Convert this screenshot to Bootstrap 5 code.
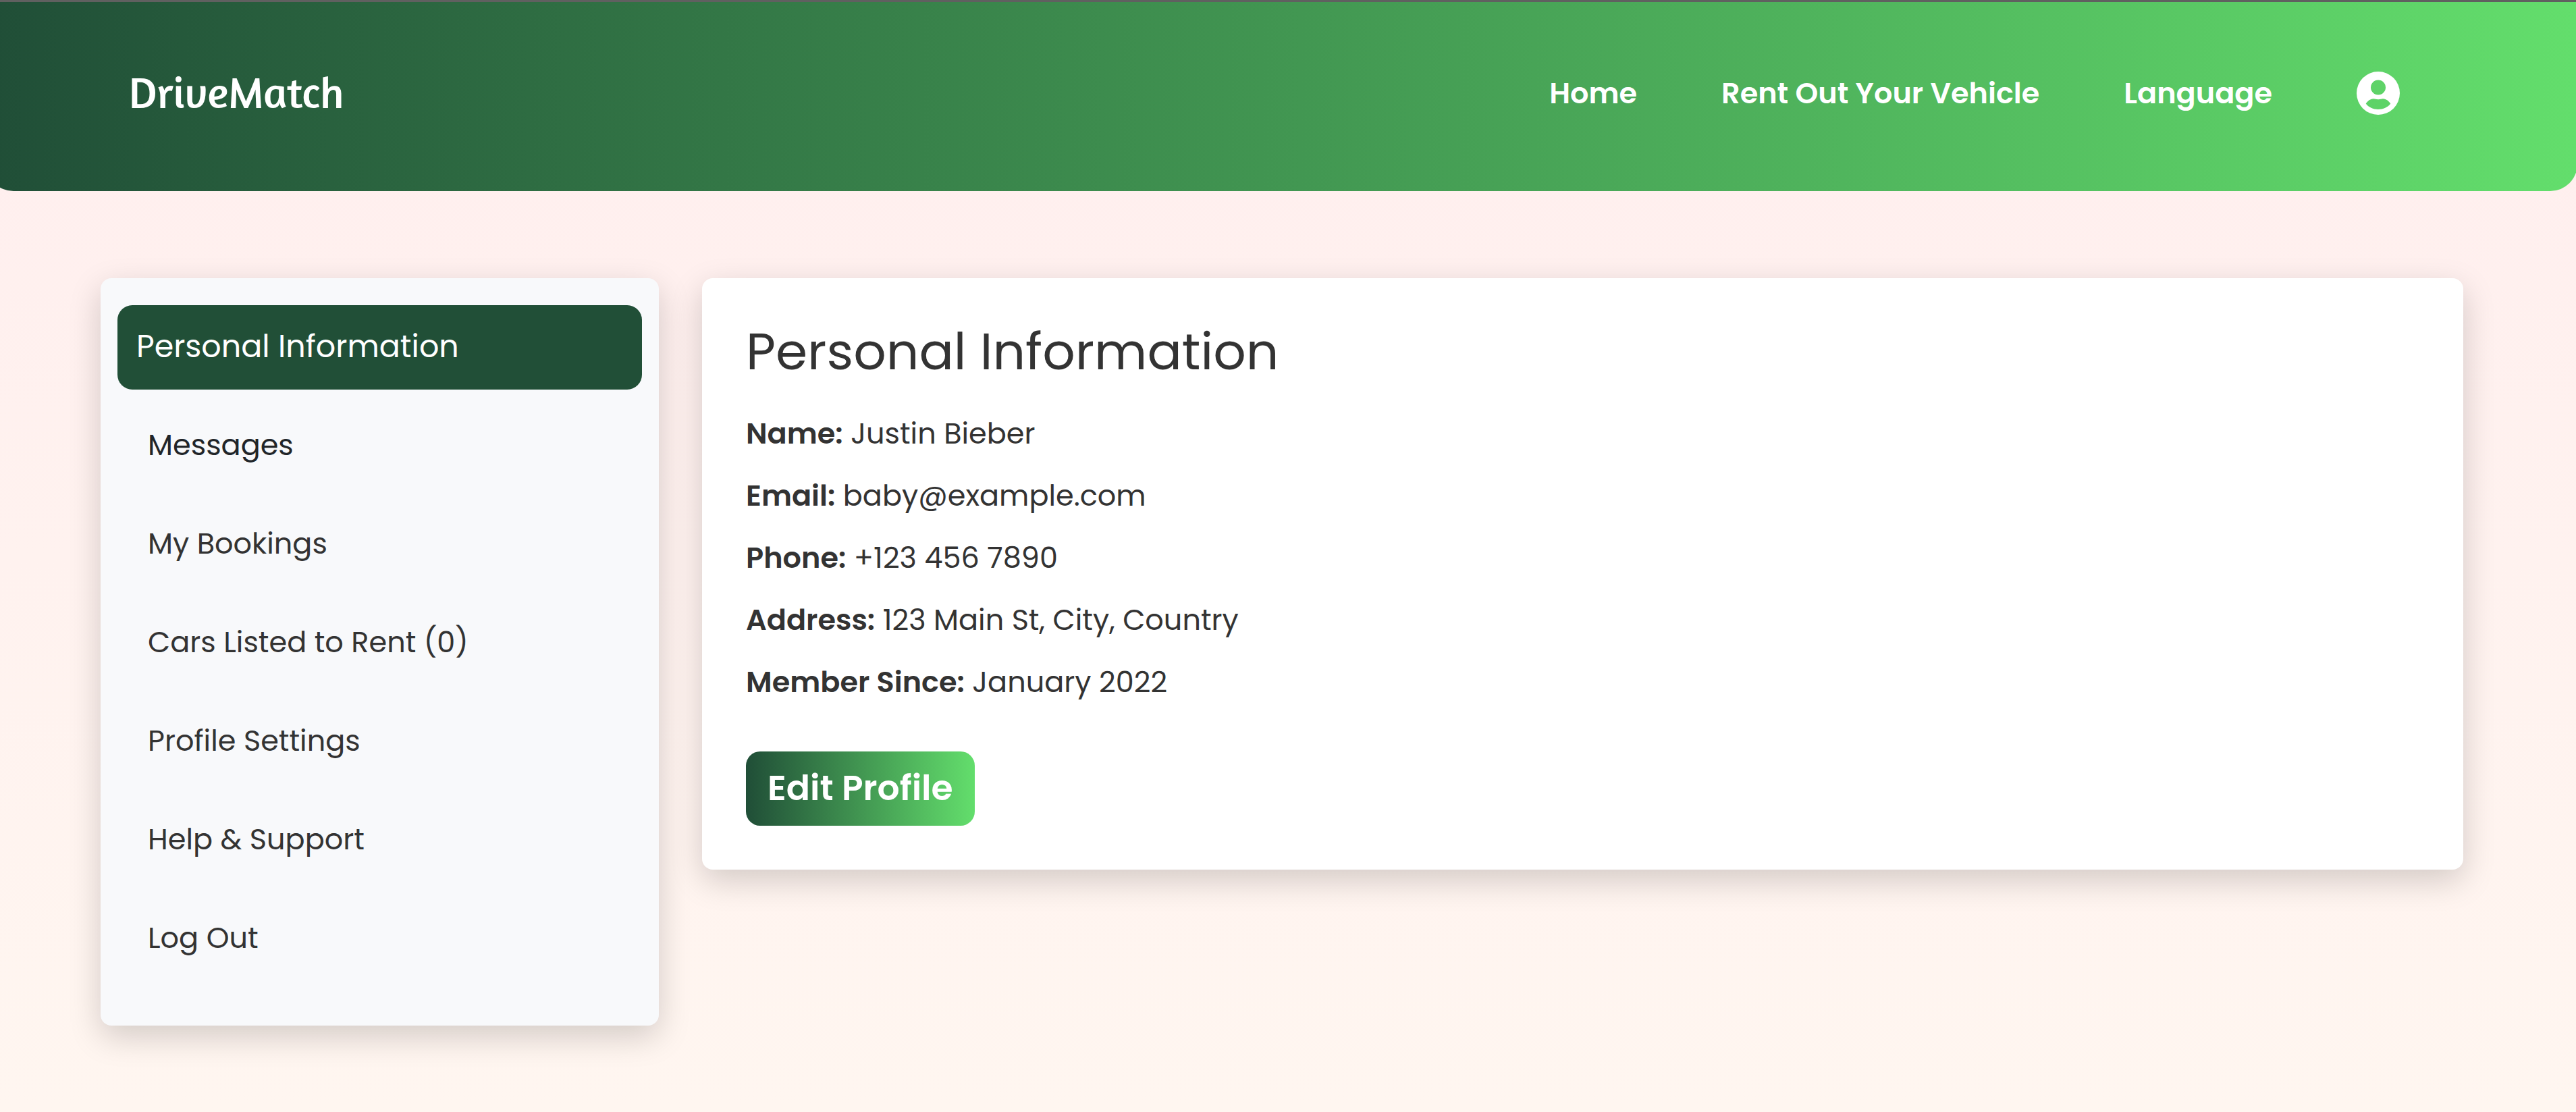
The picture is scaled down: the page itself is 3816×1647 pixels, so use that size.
<!DOCTYPE html>
<html lang="en">
<head>
<meta charset="utf-8">
<meta name="viewport" content="width=device-width, initial-scale=1">
<title>DriveMatch - Profile</title>
<link rel="stylesheet" href="https://cdn.jsdelivr.net/npm/bootstrap@5.3.0/dist/css/bootstrap.min.css">
<style>
  body {
    min-height: 100vh;
    overflow-x: hidden;
    border-top: 3px solid #606060;
    background: linear-gradient(to bottom, #ffeeee, #fff6f0);
    color: #333;
    font-family: Poppins, Inter, "Open Sans", sans-serif;
    font-size: 43px;
  }
  .page-shell { margin: 0 -2px 0 -20px; }
  .site-header {
    padding: 95px 263px 105px 211px;
    border-radius: 0 0 40px 40px;
    background: linear-gradient(to right, #204e37, #63de6c);
  }
  .site-header .navbar-brand {
    font-family: Amaranth, Lato, sans-serif;
    font-size: 65px;
    line-height: 76px;
  }
  .main-links { gap: 125px; }
  .main-links .nav-link {
    color: #fff;
    font-size: 43px;
    line-height: 80px;
    font-weight: 600;
  }
  .user-icon { width: 64px; height: 64px; }
  .profile-area { padding: 129px 169px 128px; }
  .profile-row { --bs-gutter-x: 64px; }
  .panel {
    border-radius: 16px;
    box-shadow: 0 16px 48px rgba(0, 0, 0, .175);
  }
  .side-menu { padding: 40px 25px 45px; background: #f8f9fb; }
  .side-menu .nav-link {
    margin-bottom: 21px;
    padding: 31px 45px 33px;
    border-radius: 22px;
    color: #333;
    font-size: 43px;
    line-height: 61px;
  }
  .side-menu .nav-link.active {
    padding-left: 28px;
    background: #214f37;
    color: #fff;
    font-size: 46px;
  }
  .side-menu .nav-link.unread { color: #212529; }
  .details { padding: 64px 65px 65px; background: #fff; }
  .details h2 {
    margin-bottom: 42px;
    font-size: 76px;
    line-height: 90px;
    font-weight: 400;
  }
  .details p { margin-bottom: 24px; line-height: 68px; }
  .details strong { font-weight: 600; }
  .edit-btn {
    margin-top: 69px;
    padding: 21px 32px 23px;
    border: 0;
    border-radius: 21px;
    background: linear-gradient(to right, #204e37, #63de6c);
    color: #fff;
    font-size: 52px;
    line-height: 66px;
    font-weight: 600;
  }
</style>
</head>
<body>
<div class="page-shell">
  <header class="site-header d-flex justify-content-between align-items-start">
    <a class="navbar-brand text-white m-0 p-0" href="#">DriveMatch</a>
    <nav class="main-links nav align-items-center" aria-label="Main">
      <a class="nav-link p-0" href="#">Home</a>
      <a class="nav-link p-0" href="#">Rent Out Your Vehicle</a>
      <a class="nav-link p-0" href="#">Language</a>
      <a class="nav-link p-0 d-flex align-items-center" href="#" aria-label="Account">
        <svg class="user-icon" viewBox="0 0 64 64" fill="#fff" fill-rule="evenodd" aria-hidden="true">
          <path d="M32 0a32 32 0 1 0 0 64 32 32 0 0 0 0-64ZM32 12.500a11 11 0 1 1 0 22 11 11 0 0 1 0-22ZM13.700 47.500C16 44 20 40.200 25 40.200C27 40.200 29 41.200 32 41.200C35 41.200 37 40.200 39 40.200C44 40.200 48 44 50.300 47.500C46 53 39.500 56 32 56C24.500 56 18 53 13.700 47.500Z"/>
        </svg>
      </a>
    </nav>
  </header>

  <main class="profile-area container-fluid">
    <div class="row profile-row align-items-start">
      <div class="col-3">
        <nav class="panel side-menu nav flex-column" aria-label="Profile">
          <a class="nav-link active" aria-current="page" href="#">Personal Information</a>
          <a class="nav-link unread" href="#">Messages</a>
          <a class="nav-link" href="#">My Bookings</a>
          <a class="nav-link" href="#">Cars Listed to Rent (0)</a>
          <a class="nav-link" href="#">Profile Settings</a>
          <a class="nav-link" href="#">Help &amp; Support</a>
          <a class="nav-link" href="#">Log Out</a>
        </nav>
      </div>
      <div class="col-9">
        <section class="panel details">
          <h2>Personal Information</h2>
          <p><strong>Name:</strong> Justin Bieber</p>
          <p><strong>Email:</strong> baby@example.com</p>
          <p><strong>Phone:</strong> +123 456 7890</p>
          <p><strong>Address:</strong> 123 Main St, City, Country</p>
          <p><strong>Member Since:</strong> January 2022</p>
          <button type="button" class="edit-btn btn d-block">Edit Profile</button>
        </section>
      </div>
    </div>
  </main>
</div>
<script src="https://cdn.jsdelivr.net/npm/bootstrap@5.3.0/dist/js/bootstrap.bundle.min.js"></script>
</body>
</html>
